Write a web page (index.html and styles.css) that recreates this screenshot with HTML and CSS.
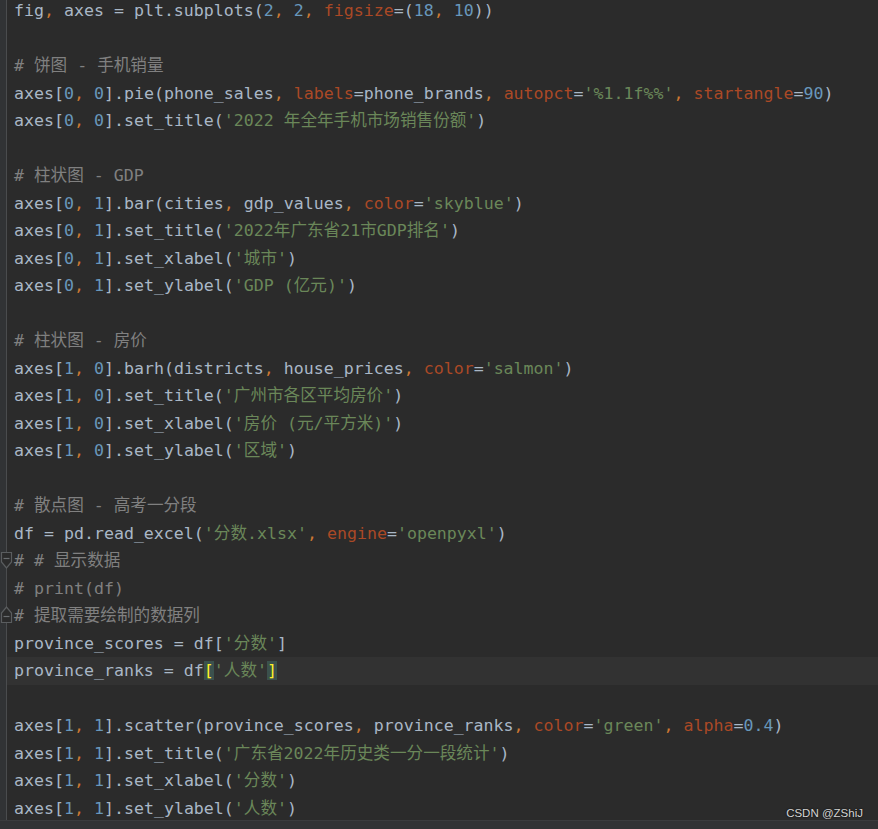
FILE: index.html
```html
<!DOCTYPE html>
<html lang="zh">
<head>
<meta charset="utf-8">
<title>editor</title>
<link rel="stylesheet" href="styles.css">
</head>
<body>
<div class="window">
  <div class="editor">
    <div class="gutter">
      <svg class="fold fold-start" width="13" height="20" viewBox="0 0 13 20"><path d="M1.5 1.5 H11.5 V11 L6.5 17 L1.5 11 Z" fill="#2b2b2b" stroke="#5a5d5f" stroke-width="1.2"/><path d="M3.5 7.5 H9.5" stroke="#6a6d70" stroke-width="1.2"/></svg>
      <svg class="fold fold-end" width="13" height="20" viewBox="0 0 13 20"><path d="M1.5 18.5 H11.5 V9 L6.5 3 L1.5 9 Z" fill="#2b2b2b" stroke="#5a5d5f" stroke-width="1.2"/><path d="M3.5 12.5 H9.5" stroke="#6a6d70" stroke-width="1.2"/></svg>
    </div>
    <div class="code">
      <div class="line">fig<span class="c">,</span> axes = plt.subplots(<span class="n">2</span><span class="c">,</span> <span class="n">2</span><span class="c">,</span> <span class="k">figsize</span>=(<span class="n">18</span><span class="c">,</span> <span class="n">10</span>))</div>
      <div class="line"></div>
      <div class="line"><span class="cm"># 饼图 - 手机销量</span></div>
      <div class="line">axes[<span class="n">0</span><span class="c">,</span> <span class="n">0</span>].pie(phone_sales<span class="c">,</span> <span class="k">labels</span>=phone_brands<span class="c">,</span> <span class="k">autopct</span>=<span class="s">'%1.1f%%'</span><span class="c">,</span> <span class="k">startangle</span>=<span class="n">90</span>)</div>
      <div class="line">axes[<span class="n">0</span><span class="c">,</span> <span class="n">0</span>].set_title(<span class="s">'2022 年全年手机市场销售份额'</span>)</div>
      <div class="line"></div>
      <div class="line"><span class="cm"># 柱状图 - GDP</span></div>
      <div class="line">axes[<span class="n">0</span><span class="c">,</span> <span class="n">1</span>].bar(cities<span class="c">,</span> gdp_values<span class="c">,</span> <span class="k">color</span>=<span class="s">'skyblue'</span>)</div>
      <div class="line">axes[<span class="n">0</span><span class="c">,</span> <span class="n">1</span>].set_title(<span class="s">'2022年广东省21市GDP排名'</span>)</div>
      <div class="line">axes[<span class="n">0</span><span class="c">,</span> <span class="n">1</span>].set_xlabel(<span class="s">'城市'</span>)</div>
      <div class="line">axes[<span class="n">0</span><span class="c">,</span> <span class="n">1</span>].set_ylabel(<span class="s">'GDP (亿元)'</span>)</div>
      <div class="line"></div>
      <div class="line"><span class="cm"># 柱状图 - 房价</span></div>
      <div class="line">axes[<span class="n">1</span><span class="c">,</span> <span class="n">0</span>].barh(districts<span class="c">,</span> house_prices<span class="c">,</span> <span class="k">color</span>=<span class="s">'salmon'</span>)</div>
      <div class="line">axes[<span class="n">1</span><span class="c">,</span> <span class="n">0</span>].set_title(<span class="s">'广州市各区平均房价'</span>)</div>
      <div class="line">axes[<span class="n">1</span><span class="c">,</span> <span class="n">0</span>].set_xlabel(<span class="s">'房价 (元/平方米)'</span>)</div>
      <div class="line">axes[<span class="n">1</span><span class="c">,</span> <span class="n">0</span>].set_ylabel(<span class="s">'区域'</span>)</div>
      <div class="line"></div>
      <div class="line"><span class="cm"># 散点图 - 高考一分段</span></div>
      <div class="line">df = pd.read_excel(<span class="s">'分数.xlsx'</span><span class="c">,</span> <span class="k">engine</span>=<span class="s">'openpyxl'</span>)</div>
      <div class="line"><span class="cm"># # 显示数据</span></div>
      <div class="line"><span class="cm"># print(df)</span></div>
      <div class="line"><span class="cm"># 提取需要绘制的数据列</span></div>
      <div class="line">province_scores = df[<span class="s">'分数'</span>]</div>
      <div class="line current">province_ranks = df<span class="bm">[</span><span class="s">'人数'</span><span class="bm">]</span></div>
      <div class="line"></div>
      <div class="line">axes[<span class="n">1</span><span class="c">,</span> <span class="n">1</span>].scatter(province_scores<span class="c">,</span> province_ranks<span class="c">,</span> <span class="k">color</span>=<span class="s">'green'</span><span class="c">,</span> <span class="k">alpha</span>=<span class="n">0.4</span>)</div>
      <div class="line">axes[<span class="n">1</span><span class="c">,</span> <span class="n">1</span>].set_title(<span class="s">'广东省2022年历史类一分一段统计'</span>)</div>
      <div class="line">axes[<span class="n">1</span><span class="c">,</span> <span class="n">1</span>].set_xlabel(<span class="s">'分数'</span>)</div>
      <div class="line">axes[<span class="n">1</span><span class="c">,</span> <span class="n">1</span>].set_ylabel(<span class="s">'人数'</span>)</div>
    </div>
  </div>
  <div class="statusbar"></div>
  <div class="watermark">CSDN @ZShiJ</div>
</div>
</body>
</html>
```
FILE: styles.css
```css
html, body {
  margin: 0;
  padding: 0;
  background: #2b2b2b;
}
.window {
  position: relative;
  width: 878px;
  height: 829px;
  overflow: hidden;
  display: flex;
  flex-direction: column;
  background: #2b2b2b;
}
.editor {
  flex: 1;
  display: flex;
  overflow: hidden;
}
.gutter {
  position: relative;
  width: 6px;
  flex: none;
  background: #313335;
  border-right: 1px solid #4a4c4e;
}
.fold {
  position: absolute;
  left: 0;
  display: block;
}
.fold-start { top: 551px; }
.fold-end { top: 604px; }
.code {
  flex: 1;
  margin-top: -3px;
  font-family: "DejaVu Sans Mono", "Noto Sans CJK SC", monospace;
  font-size: 16.6px;
  line-height: 27.5px;
  color: #a9b7c6;
}
.line {
  height: 27.5px;
  padding-left: 7px;
  white-space: pre;
}
.line.current {
  background: #323232;
}
.c { color: #cc7832; }
.n { color: #6897bb; }
.k { color: #aa4926; }
.s { color: #6a8759; }
.cm { color: #808080; }
.bm {
  color: #ffef28;
  background: #3b514d;
}
.statusbar {
  height: 8px;
  flex: none;
  background: #313335;
  border-top: 1px solid #3a3c3e;
}
.watermark {
  position: absolute;
  right: 15px;
  bottom: 10px;
  font-family: "Liberation Sans", Arial, sans-serif;
  font-size: 11.5px;
  color: #d4d4d4;
  text-shadow: 0 0 2px #000;
}
```
